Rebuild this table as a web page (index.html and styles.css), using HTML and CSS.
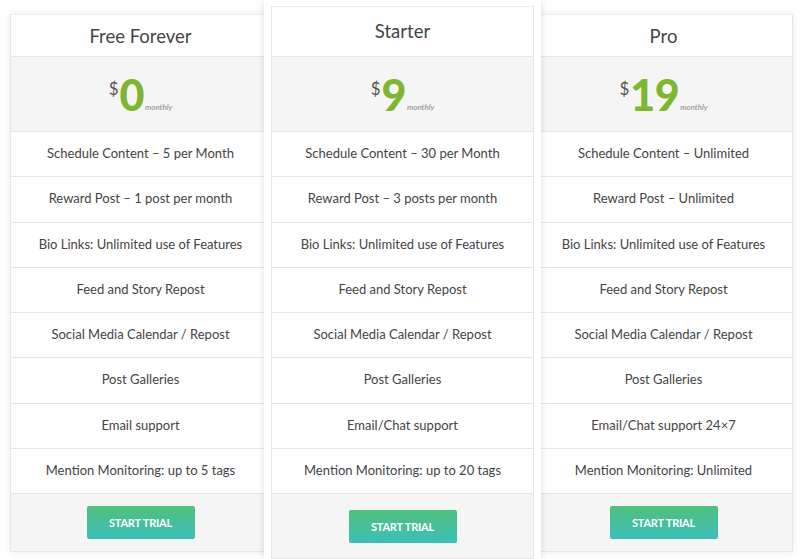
FILE: index.html
```html
<!DOCTYPE html>
<html>
<head>
<meta charset="utf-8">
<link rel="stylesheet" href="styles.css">
</head>
<body>
<div class="plans">
  <div class="card side left">
    <div class="inner">
      <div class="title">Free Forever</div>
      <div class="price"><span class="cur">$</span><span class="amount">0</span><span class="per">monthly</span></div>
      <div class="row">Schedule Content – 5 per Month</div>
      <div class="row">Reward Post – 1 post per month</div>
      <div class="row">Bio Links: Unlimited use of Features</div>
      <div class="row">Feed and Story Repost</div>
      <div class="row">Social Media Calendar / Repost</div>
      <div class="row">Post Galleries</div>
      <div class="row">Email support</div>
      <div class="row">Mention Monitoring: up to 5 tags</div>
      <div class="foot"><a class="btn">START TRIAL</a></div>
    </div>
  </div>
  <div class="card featured">
    <div class="inner">
      <div class="title">Starter</div>
      <div class="price"><span class="cur">$</span><span class="amount">9</span><span class="per">monthly</span></div>
      <div class="row">Schedule Content – 30 per Month</div>
      <div class="row">Reward Post – 3 posts per month</div>
      <div class="row">Bio Links: Unlimited use of Features</div>
      <div class="row">Feed and Story Repost</div>
      <div class="row">Social Media Calendar / Repost</div>
      <div class="row">Post Galleries</div>
      <div class="row">Email/Chat support</div>
      <div class="row">Mention Monitoring: up to 20 tags</div>
      <div class="foot"><a class="btn">START TRIAL</a></div>
    </div>
  </div>
  <div class="card side right">
    <div class="inner">
      <div class="title">Pro</div>
      <div class="price"><span class="cur">$</span><span class="amount">19</span><span class="per">monthly</span></div>
      <div class="row">Schedule Content – Unlimited</div>
      <div class="row">Reward Post – Unlimited</div>
      <div class="row">Bio Links: Unlimited use of Features</div>
      <div class="row">Feed and Story Repost</div>
      <div class="row">Social Media Calendar / Repost</div>
      <div class="row">Post Galleries</div>
      <div class="row">Email/Chat support 24×7</div>
      <div class="row">Mention Monitoring: Unlimited</div>
      <div class="foot"><a class="btn">START TRIAL</a></div>
    </div>
  </div>
</div>
</body>
</html>
```

FILE: styles.css
```css
* { box-sizing: border-box; }
html, body {
  margin: 0;
  padding: 0;
  background: #ffffff;
  font-family: Lato, "Open Sans", sans-serif;
  color: #444;
  overflow: hidden;
}
.plans {
  display: flex;
  align-items: flex-start;
  padding-left: 10px;
  width: 800px;
  height: 559px;
}
.card {
  background: #fff;
}
.side {
  margin-top: 14px;
  box-shadow: 0 0 8px rgba(0,0,0,0.08);
}
.side.left {
  width: 261px;
  margin-right: -7px;
}
.side.right {
  width: 259px;
  margin-left: -7px;
}
.featured {
  position: relative;
  z-index: 2;
  width: 277px;
  padding: 6px 7px 0 7px;
  box-shadow: 0 0 7px rgba(0,0,0,0.13);
}
.inner {
  border: 1px solid #e6e6e6;
  border-top-color: #ececec;
}
.title {
  height: 42px;
  display: flex;
  align-items: center;
  justify-content: center;
  font-size: 18.5px;
  color: #454545;
  border-bottom: 1px solid #e6e6e6;
  background: #fff;
}
.featured .title {
  height: 50px;
  padding-bottom: 1px;
}
.price {
  height: 75px;
  background: #f5f5f5;
  border-bottom: 1px solid #e6e6e6;
  display: flex;
  justify-content: center;
  align-items: baseline;
  padding-top: 16px;
  line-height: 1;
}
.cur {
  font-size: 17px;
  color: #555;
  align-self: flex-start;
  margin-top: 7px;
  margin-right: 1px;
}
.amount {
  font-size: 43px;
  font-weight: 900;
  color: #7cb72f;
  letter-spacing: -0.5px;
}
.per {
  font-size: 8px;
  font-style: italic;
  color: #888;
  margin-left: 1px;
  position: relative;
  top: -1px;
}
.row {
  height: 45.25px;
  display: flex;
  align-items: center;
  justify-content: center;
  font-size: 13px;
  color: #444;
  border-bottom: 1px solid #e6e6e6;
  background: #fff;
  padding-bottom: 2px;
}
.foot {
  height: 57px;
  background: #f5f5f5;
  display: flex;
  align-items: center;
  justify-content: center;
}
.featured .foot {
  height: 64px;
  padding-top: 1px;
}
.btn {
  width: 108px;
  height: 33px;
  display: flex;
  align-items: center;
  justify-content: center;
  background: linear-gradient(to bottom, #50c07c, #3cbfba);
  color: #fff;
  font-size: 11px;
  font-weight: 700;
  border-radius: 2px;
  letter-spacing: -0.2px;
}
```
